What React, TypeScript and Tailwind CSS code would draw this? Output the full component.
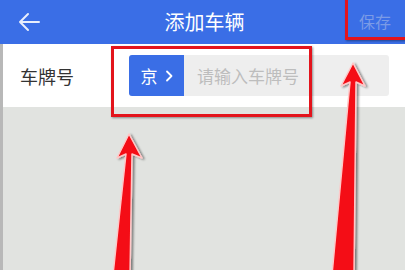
import React from "react";

export default function App() {
  return (
    <div
      className="relative w-[405px] h-[270px] overflow-hidden bg-[#e1e3e0]"
      style={{ fontFamily: '"Noto Sans CJK SC", "Noto Sans", sans-serif' }}
    >
      {/* header */}
      <div className="relative h-[44px] bg-[#3a6ee6] flex items-center">
        <div className="w-[60px] pl-[17px] flex items-center">
          <svg width="24" height="20" viewBox="0 0 24 20" fill="none">
            <path d="M22 10H3M11 2L3 10L11 18" stroke="#e8eefc" strokeWidth="2" strokeLinecap="round" strokeLinejoin="round" />
          </svg>
        </div>
        <div className="flex-1 text-center text-white text-[20px] leading-none pl-[4px]">添加车辆</div>
        <div className="w-[60px] text-[16px] text-[#7b9be6] leading-none pl-[14px] pb-[2px]">保存</div>
      </div>
      {/* form row */}
      <div className="flex h-[63px] bg-white border-l-[3px] border-[#b8b8b8] items-center pl-[17px] pr-[16px]">
        <div className="w-[109px] text-[18px] text-[#333] leading-none">车牌号</div>
        <div className="flex-1 h-[41px] bg-[#eeeeee] rounded-[3px] flex items-center">
          <div className="w-[55px] h-full bg-[#3a6ee6] rounded-l-[3px] flex items-center justify-center gap-[7px] text-white text-[17px] leading-none">
            <span>京</span>
            <svg width="8" height="12" viewBox="0 0 8 12" fill="none">
              <path d="M2 1.5L6.5 6L2 10.5" stroke="white" strokeWidth="1.8" strokeLinecap="round" strokeLinejoin="round" />
            </svg>
          </div>
          <div className="pl-[13px] text-[17px] text-[#bdbdbd] leading-none">请输入车牌号</div>
        </div>
      </div>
      <div className="h-[163px] border-l-[3px] border-[#b8b8b8]" />

      {/* annotations */}
      <div className="absolute left-[111px] top-[46px] w-[201px] h-[71px] border-[3px] border-[#e3141c] shadow-[1px_1px_2px_rgba(0,0,0,0.4)]" />
      <div className="absolute left-[345px] top-[-3px] w-[64px] h-[43px] border-[3px] border-[#e3141c] shadow-[1px_1px_2px_rgba(0,0,0,0.4)]" />
      <svg className="absolute left-0 top-0" width="405" height="270" viewBox="0 0 405 270">
        <defs>
          <filter id="sh" x="-50%" y="-10%" width="200%" height="130%">
            <feDropShadow dx="2" dy="1" stdDeviation="1.2" floodColor="#000" floodOpacity="0.45" />
          </filter>
        </defs>
        <g filter="url(#sh)">
          <path
            d="M129 134 L142 158 L132 154 L130 275 L113 275 L126 154 L117 158 Z"
            fill="#f40b12"
            stroke="#ffc8c8"
            strokeWidth="1.5"
            strokeLinejoin="round"
          />
          <path
            d="M353 63 L365 86 L356 82 L354 275 L332 275 L350 82 L341 86 Z"
            fill="#f40b12"
            stroke="#ffc8c8"
            strokeWidth="1.5"
            strokeLinejoin="round"
          />
        </g>
      </svg>
    </div>
  );
}
